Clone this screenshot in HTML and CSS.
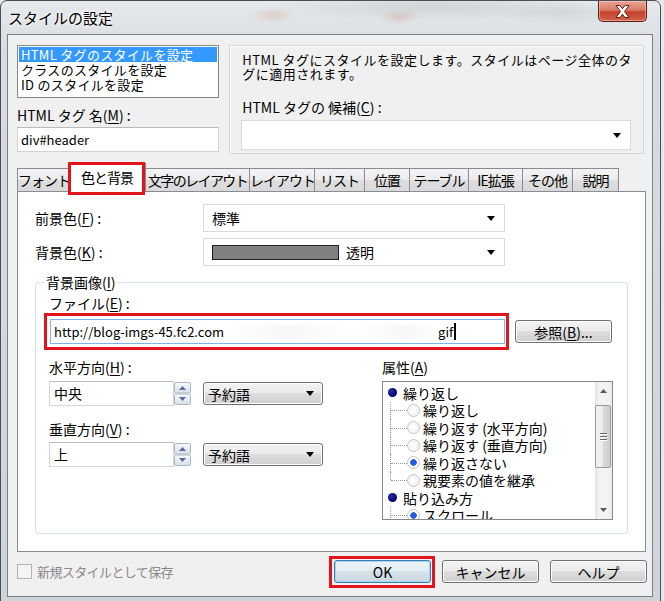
FILE: index.html
```html
<!DOCTYPE html>
<html lang="ja">
<head>
    <meta charset="UTF-8">
    <meta name="viewport" content="width=device-width, initial-scale=1.0">
    <title>スタイルの設定</title>
    <link rel="stylesheet" href="styles.css">
</head>
<body>
<div class="window">
    <div class="titlebar">
        <span class="title">スタイルの設定</span>
        <div class="close-btn">
            <svg width="15" height="13" viewBox="0 0 15 13"><path d="M1 .5h4l2.5 3.3L10 .5h4L9.5 6.5l4.5 6h-4L7.5 9.2 5 12.5H1l4.5-6z" fill="#fff" stroke="#6a1f14" stroke-width="1"/></svg>
        </div>
    </div>

    <div class="client">
        <div class="top">
            <div class="top-left">
                <div class="listbox">
                    <div class="list-item selected">HTML タグのスタイルを設定</div>
                    <div class="list-item">クラスのスタイルを設定</div>
                    <div class="list-item">ID のスタイルを設定</div>
                </div>
                <div class="label tag-label">HTML タグ 名(<u>M</u>) :</div>
                <div class="textbox">div#header</div>
            </div>
            <div class="info">
                <p class="info-text">HTML タグにスタイルを設定します。スタイルはページ全体のタ<br>グに適用されます。</p>
                <div class="label cand-label">HTML タグの 候補(<u>C</u>) :</div>
                <div class="combo combo-tag">
                    <span></span>
                    <svg class="arrow" width="8" height="5" viewBox="0 0 8 5"><path d="M0 0h8L4 5z"/></svg>
                </div>
            </div>
        </div>

        <!-- タブ -->
        <div class="tabs">
            <div class="tab tab-font">フォント</div>
            <div class="tab tab-color active">色と背景</div>
            <div class="tab tab-text narrow">文字のレイアウト</div>
            <div class="tab tab-layout">レイアウト</div>
            <div class="tab tab-list">リスト</div>
            <div class="tab tab-pos">位置</div>
            <div class="tab tab-table">テーブル</div>
            <div class="tab tab-ie">IE拡張</div>
            <div class="tab tab-other">その他</div>
            <div class="tab tab-desc">説明</div>
        </div>

        <div class="tab-panel">
            <div class="field-row">
                <div class="field-label">前景色(<u>F</u>) :</div>
                <div class="combo combo-field">
                    <span>標準</span>
                    <svg class="arrow" width="8" height="5" viewBox="0 0 8 5"><path d="M0 0h8L4 5z"/></svg>
                </div>
            </div>
            <div class="field-row second">
                <div class="field-label">背景色(<u>K</u>) :</div>
                <div class="combo combo-field">
                    <span class="color-value"><span class="swatch"></span>透明</span>
                    <svg class="arrow" width="8" height="5" viewBox="0 0 8 5"><path d="M0 0h8L4 5z"/></svg>
                </div>
            </div>

            <fieldset class="group">
                <legend>背景画像(<u>I</u>)</legend>
                <div class="label">ファイル(<u>E</u>) :</div>
                <div class="file-row">
                    <div class="file-input">http://blog-imgs-45.fc2.com<span class="blurred"></span>gif<span class="caret"></span></div>
                    <div class="btn browse-btn">参照(<u>B</u>)...</div>
                </div>

                <div class="pos-cols">
                    <div class="pos-left">
                        <div class="label">水平方向(<u>H</u>) :</div>
                        <div class="spin-row">
                            <div class="spin-input">中央</div>
                            <svg class="spin" width="17" height="23" viewBox="0 0 17 23">
                                <defs>
                                    <linearGradient id="spin-grad" x1="0" y1="0" x2="0" y2="1">
                                        <stop offset="0" stop-color="#f7f9fc"/>
                                        <stop offset="1" stop-color="#d6dee8"/>
                                    </linearGradient>
                                </defs>
                                <rect x=".5" y=".5" width="16" height="10.5" rx="1.5" fill="url(#spin-grad)" stroke="#aeb8c4"/>
                                <rect x=".5" y="12" width="16" height="10.5" rx="1.5" fill="url(#spin-grad)" stroke="#aeb8c4"/>
                                <path d="M5 8h7L8.5 4z" fill="#52709a"/>
                                <path d="M5 15h7l-3.5 4z" fill="#52709a"/>
                            </svg>
                            <div class="dropdown">予約語<svg class="arrow" width="8" height="5" viewBox="0 0 8 5"><path d="M0 0h8L4 5z"/></svg></div>
                        </div>
                        <div class="label v-label">垂直方向(<u>V</u>) :</div>
                        <div class="spin-row">
                            <div class="spin-input">上</div>
                            <svg class="spin" width="17" height="23" viewBox="0 0 17 23">
                                <rect x=".5" y=".5" width="16" height="10.5" rx="1.5" fill="url(#spin-grad)" stroke="#aeb8c4"/>
                                <rect x=".5" y="12" width="16" height="10.5" rx="1.5" fill="url(#spin-grad)" stroke="#aeb8c4"/>
                                <path d="M5 8h7L8.5 4z" fill="#52709a"/>
                                <path d="M5 15h7l-3.5 4z" fill="#52709a"/>
                            </svg>
                            <div class="dropdown">予約語<svg class="arrow" width="8" height="5" viewBox="0 0 8 5"><path d="M0 0h8L4 5z"/></svg></div>
                        </div>
                    </div>

                    <div class="pos-right">
                        <div class="label">属性(<u>A</u>)</div>
                        <div class="tree-box">
                            <div class="tree-list">
                                <div class="tree-row"><span class="bullet"></span>繰り返し</div>
                                <div class="tree-row"><span class="branch"></span><span class="radio"></span>繰り返し</div>
                                <div class="tree-row"><span class="branch"></span><span class="radio"></span>繰り返す (水平方向)</div>
                                <div class="tree-row"><span class="branch"></span><span class="radio"></span>繰り返す (垂直方向)</div>
                                <div class="tree-row"><span class="branch"></span><span class="radio checked"></span>繰り返さない</div>
                                <div class="tree-row"><span class="branch last"></span><span class="radio"></span>親要素の値を継承</div>
                                <div class="tree-row"><span class="bullet"></span>貼り込み方</div>
                                <div class="tree-row"><span class="branch"></span><span class="radio checked"></span>スクロール</div>
                            </div>
                            <div class="scrollbar">
                                <div class="sb-btn"><svg width="7" height="4" viewBox="0 0 7 4"><path d="M0 4h7L3.5 0z"/></svg></div>
                                <div class="sb-track">
                                    <div class="sb-thumb"><span></span><span></span><span></span></div>
                                </div>
                                <div class="sb-btn"><svg width="7" height="4" viewBox="0 0 7 4"><path d="M0 0h7L3.5 4z"/></svg></div>
                            </div>
                        </div>
                    </div>
                </div>
            </fieldset>
        </div>

        <div class="footer">
            <span class="checkbox"></span>
            <span class="save-label">新規スタイルとして保存</span>
            <div class="btn btn-ok">OK</div>
            <div class="btn">キャンセル</div>
            <div class="btn">ヘルプ</div>
        </div>
    </div>
</div>
</body>
</html>
```

FILE: styles.css
```css
* {
    box-sizing: border-box;
}

body {
    margin: 0;
    background-color: #e6e8ea;
    font-family: "Noto Sans CJK JP", "Noto Sans", sans-serif;
    font-size: 14px;
    color: #000;
    overflow: hidden;
}

u {
    text-underline-offset: 2px;
}

/* ウィンドウ枠 */
.window {
    display: flex;
    flex-direction: column;
    width: 661px;
    height: 610px;
    padding: 0 7px 12px 6px;
    border: 1px solid #4a4f55;
    border-radius: 7px 7px 0 0;
    background:
        radial-gradient(ellipse 22px 8px at 272px 14px, rgba(200, 120, 80, 0.22), transparent),
        radial-gradient(ellipse 20px 8px at 398px 16px, rgba(200, 110, 80, 0.22), transparent),
        radial-gradient(ellipse 170px 14px at 430px 6px, rgba(110, 110, 110, 0.16), transparent),
        radial-gradient(ellipse 70px 12px at 565px 12px, rgba(110, 150, 150, 0.14), transparent),
        linear-gradient(#e6e9ec, #d8dce0 50px, #cfd4d9);
}

.titlebar {
    display: flex;
    align-items: center;
    height: 33px;
}

.title {
    margin-left: 1px;
    font-size: 15px;
    text-shadow: 0 0 6px #fff, 0 0 3px #fff;
}

.close-btn {
    display: flex;
    align-items: center;
    justify-content: center;
    align-self: flex-start;
    margin-left: auto;
    margin-right: 6px;
    width: 49px;
    height: 21px;
    border: 1px solid #5b2119;
    border-top: none;
    border-radius: 0 0 5px 5px;
    background: linear-gradient(#e8a596, #d77a66 45%, #c4402a 55%, #d2644a);
    box-shadow: inset 0 0 0 1px rgba(255, 210, 200, 0.5);
}

.client {
    flex: 1;
    padding: 10px 5px 0 9px;
    border: 1px solid #7b8087;
    background-color: #f0f0f0;
}

/* 上部 */
.top {
    display: flex;
    align-items: flex-start;
    height: 109px;
}

.top-left {
    width: 204px;
}

.listbox {
    height: 53px;
    padding: 1px;
    border: 1px solid #828790;
    background-color: #fff;
    font-size: 13px;
}

.list-item {
    height: 15px;
    line-height: 15px;
    padding-left: 2px;
    white-space: nowrap;
    letter-spacing: 0.3px;
}

.list-item.selected {
    background-color: #3399ff;
    color: #fff;
}

.label {
    height: 16px;
    line-height: 16px;
    white-space: nowrap;
}

.tag-label {
    margin-top: 9px;
}

.textbox {
    height: 25px;
    margin-top: 4px;
    padding-left: 3px;
    line-height: 23px;
    border: 1px solid #d3d3d3;
    border-top-color: #b9b9b9;
    background-color: #fff;
    font-size: 13px;
}

.info {
    flex: 1;
    height: 109px;
    margin-left: 10px;
    margin-right: 3px;
    padding: 7px 11px 0 12px;
    border: 1px solid #d6d6d6;
    box-shadow: inset 1px 1px 0 #fff;
}

.info-text {
    margin: 0;
    font-size: 13px;
    line-height: 14px;
    letter-spacing: 0.5px;
    white-space: nowrap;
}

.cand-label {
    margin-top: 18px;
}

.combo {
    display: flex;
    align-items: center;
    justify-content: space-between;
    padding: 0 9px 0 8px;
    border: 1px solid #dadada;
    background-color: #fff;
}

.combo-tag {
    height: 30px;
    margin: 5px 1px 0 -1px;
}

/* タブ */
.tabs {
    display: flex;
    align-items: flex-end;
    height: 28px;
    margin-top: 9px;
}

.tab {
    height: 23px;
    margin-left: -1px;
    line-height: 22px;
    text-align: center;
    white-space: nowrap;
    letter-spacing: -1px;
    border: 1px solid #898c95;
    border-bottom: none;
    background: linear-gradient(#f3f3f3, #ebebeb 50%, #dedede 50%, #d9d9d9);
}

.tab:first-child {
    margin-left: 0;
}

.tab.narrow {
    letter-spacing: -1.6px;
}

.tab.active {
    position: relative;
    z-index: 1;
    height: 29px;
    margin-bottom: -1px;
    line-height: 26px;
    background: #fff;
}

.tab.active::after {
    content: "";
    position: absolute;
    left: -1px;
    right: 0;
    top: -2px;
    bottom: -3px;
    border: 3px solid #e3141b;
}

.tab-font { width: 52px; }
.tab-color { width: 78px; }
.tab-text { width: 105px; }
.tab-layout { width: 66px; }
.tab-list { width: 51px; }
.tab-pos { width: 46px; }
.tab-table { width: 60px; }
.tab-ie { width: 55px; }
.tab-other { width: 51px; }
.tab-desc { width: 47px; }

.tab-panel {
    height: 361px;
    margin-right: 1px;
    padding: 12px 17px 0 17px;
    border: 1px solid #898c95;
    background-color: #fff;
}

.field-row {
    display: flex;
    align-items: center;
    height: 28px;
}

.field-row.second {
    margin-top: 6px;
}

.field-label {
    width: 168px;
}

.combo-field {
    width: 302px;
    height: 28px;
}

.color-value {
    display: flex;
    align-items: center;
}

.swatch {
    width: 127px;
    height: 15px;
    margin-right: 7px;
    border: 1px solid #1e1e1e;
    background-color: #808080;
}

/* 背景画像 */
.group {
    margin: 8px 0 0;
    padding: 5px 13px 13px 13px;
    border: 1px solid #d5dfe5;
    border-radius: 3px;
    box-shadow: inset 1px 1px 0 #fff;
}

.group legend {
    margin-left: -5px;
    padding: 0 2px;
    line-height: 16px;
}

.file-row {
    display: flex;
    align-items: center;
    margin-top: 8px;
}

.file-input {
    position: relative;
    display: flex;
    align-items: center;
    width: 455px;
    height: 25px;
    margin-left: 1px;
    padding-left: 3px;
    border: 1px solid #7eb4ea;
    background-color: #fff;
    font-size: 13px;
    white-space: nowrap;
}

.file-input::after {
    content: "";
    position: absolute;
    left: -7px;
    right: -5px;
    top: -7px;
    bottom: -7px;
    border: 3px solid #e3141b;
}

.blurred {
    display: inline-block;
    width: 214px;
    height: 14px;
    background: linear-gradient(90deg, transparent, rgba(190, 190, 190, 0.12) 30%, transparent 60%, rgba(190, 190, 190, 0.12) 85%, transparent);
}

.caret {
    display: inline-block;
    width: 2px;
    height: 17px;
    margin-left: 1px;
    background-color: #000;
}

.btn {
    display: flex;
    align-items: center;
    justify-content: center;
    width: 97px;
    height: 23px;
    border: 1px solid #707070;
    border-radius: 3px;
    background: linear-gradient(#f2f2f2, #ebebeb 49%, #dddddd 50%, #cfcfcf);
    box-shadow: inset 0 0 0 1px #fcfcfc;
    white-space: nowrap;
}

.browse-btn {
    margin-left: 10px;
}

.pos-cols {
    display: flex;
    margin-top: 15px;
}

.pos-left {
    width: 333px;
}

.v-label {
    margin-top: 15px;
}

.spin-row {
    display: flex;
    align-items: center;
    height: 25px;
    margin-top: 6px;
}

.v-label + .spin-row {
    margin-top: 5px;
}

.spin-input {
    width: 125px;
    height: 25px;
    padding-left: 4px;
    line-height: 23px;
    border: 1px solid #d5d5d5;
    border-top-color: #bdbdbd;
    background-color: #fff;
}

.spin {
    display: block;
}

.dropdown {
    display: flex;
    align-items: center;
    justify-content: space-between;
    width: 120px;
    height: 23px;
    margin-left: 12px;
    padding: 0 8px 0 4px;
    border: 1px solid #707070;
    border-radius: 3px;
    background: linear-gradient(#f2f2f2, #ebebeb 49%, #dddddd 50%, #cfcfcf);
    box-shadow: inset 0 0 0 1px #fcfcfc;
}

/* 属性ツリー */
.pos-right {
    width: 231px;
}

.tree-box {
    display: flex;
    height: 139px;
    margin-top: 6px;
    border: 1px solid #828790;
    background-color: #fff;
}

.tree-list {
    flex: 1;
    padding: 2px 0 0 5px;
    overflow: hidden;
}

.tree-row {
    display: flex;
    align-items: center;
    height: 17.5px;
    white-space: nowrap;
}

.bullet {
    width: 9px;
    height: 9px;
    margin-right: 6px;
    border-radius: 50%;
    background: radial-gradient(circle at 35% 35%, #2a2aa8, #000070 70%);
}

.branch {
    position: relative;
    align-self: stretch;
    width: 19px;
}

.branch::before {
    content: "";
    position: absolute;
    left: 2px;
    top: 0;
    bottom: 0;
    border-left: 1px dotted #9a9a9a;
}

.branch.last::before {
    bottom: 50%;
}

.branch::after {
    content: "";
    position: absolute;
    left: 3px;
    right: 0;
    top: 50%;
    border-top: 1px dotted #9a9a9a;
}

.radio {
    width: 13px;
    height: 13px;
    margin-right: 3px;
    border: 1px solid #c6c6c6;
    border-radius: 50%;
    background: radial-gradient(circle, #ffffff, #f0f0f0);
}

.radio.checked {
    background: radial-gradient(circle, #1f58e0 0, #2a62e6 3px, #ffffff 3.6px);
}

.scrollbar {
    display: flex;
    flex-direction: column;
    width: 17px;
    background: linear-gradient(90deg, #e3e3e3, #f3f3f3 25%, #f3f3f3 75%, #ebebeb);
}

.sb-btn {
    display: flex;
    align-items: center;
    justify-content: center;
    height: 18px;
    fill: #5a5a5a;
}

.sb-track {
    flex: 1;
    padding: 5px 0 0 0;
}

.sb-thumb {
    display: flex;
    flex-direction: column;
    align-items: center;
    justify-content: center;
    gap: 2px;
    width: 16px;
    height: 63px;
    border: 1px solid #999;
    border-radius: 2px;
    background: linear-gradient(90deg, #f4f4f4, #ebebeb 50%, #d9d9d9 50%, #d0d0d0);
}

.sb-thumb span {
    width: 7px;
    height: 1px;
    background-color: #6a6a6a;
    box-shadow: 0 1px 0 #fff;
}

.arrow {
    display: block;
    fill: #000;
}

/* 下部 */
.footer {
    display: flex;
    align-items: center;
    gap: 11px;
    height: 23px;
    margin-top: 8px;
}

.checkbox {
    width: 15px;
    height: 15px;
    border: 1px solid #b3b3b3;
    background-color: #f4f4f4;
}

.save-label {
    margin-left: -6px;
    margin-right: auto;
    color: #8a8a8a;
    font-size: 13px;
    letter-spacing: -0.6px;
}

.btn-ok {
    position: relative;
    border-color: #3c7fb1;
    box-shadow: inset 0 0 0 1px #9fd8f6;
    background: linear-gradient(#eef4f8, #e4edf3 49%, #d6e2ea 50%, #cbd8e2);
}

.btn-ok::after {
    content: "";
    position: absolute;
    left: -6px;
    right: -5px;
    top: -5px;
    bottom: -6px;
    border: 3px solid #e3141b;
}
```
